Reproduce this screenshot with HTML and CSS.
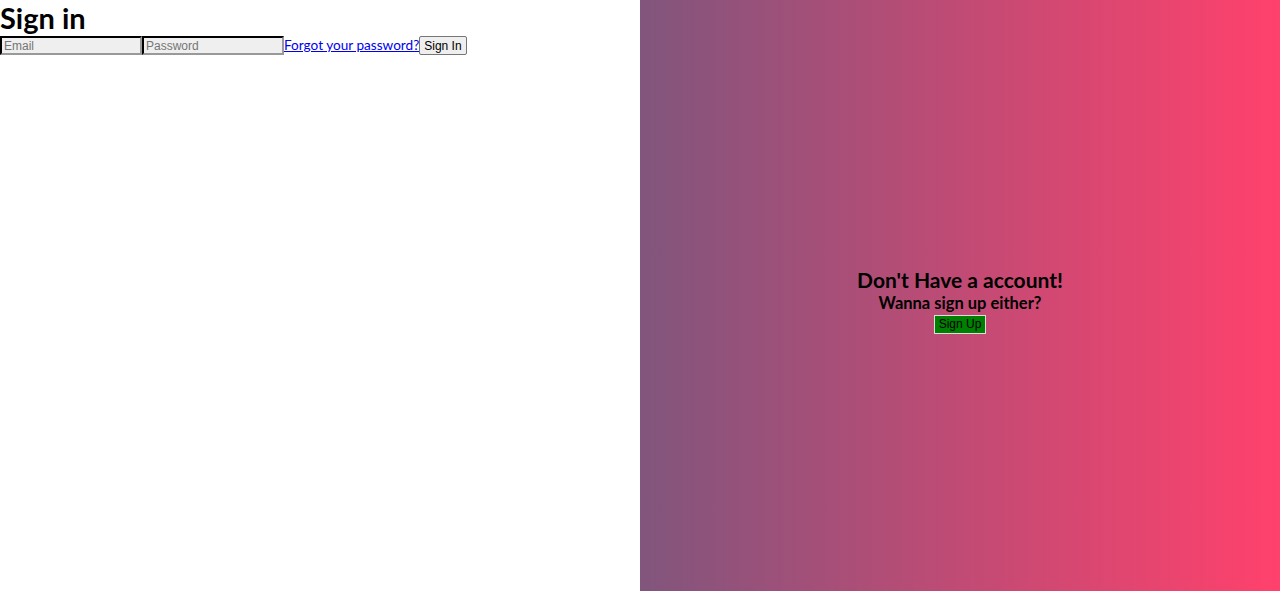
FILE: index.html
```html
<!DOCTYPE html>
<html>
<head>
<meta charset="utf-8">
<link rel="stylesheet" href="styles.css">
</head>
<body>
<div class="page">
  <div class="left">
    <h1 class="title">Sign in</h1>
    <form class="form">
      <input class="field" type="email" placeholder="Email"><input class="field" type="password" placeholder="Password"><a class="forgot" href="#">Forgot your password?</a><button class="btn" type="button">Sign In</button>
    </form>
  </div>
  <div class="right">
    <h2 class="cta-title">Don't Have a account!</h2>
    <h3 class="cta-sub">Wanna sign up either?</h3>
    <button class="btn-up" type="button">Sign Up</button>
  </div>
</div>
</body>
</html>
```
FILE: styles.css
```css
html, body { margin: 0; padding: 0; height: 100%; }
body { font-family: Lato, "Noto Sans", sans-serif; }
.page { display: flex; height: 591px; }
.left { width: 640px; background: #fff; }
.title { margin: 0; font-size: 29px; line-height: 36px; font-weight: 700; color: #000; }
.form { display: flex; align-items: center; height: 19px; }
.field { box-sizing: border-box; width: 142px; height: 19px; margin: 0; padding: 0 2px; border: 2px inset #767676; border-color: #333 #999 #999 #333; background: #efefef; font-family: "Liberation Sans", Arial, sans-serif; font-size: 12px; }
.field::placeholder { color: #757575; }
.forgot { color: #0000ee; font-size: 13.6px; line-height: 17px; text-decoration: underline; }
.btn { box-sizing: border-box; height: 19px; padding: 0 4px; margin: 0; font-family: "Liberation Sans", Arial, sans-serif; font-size: 12px; background: #efefef; border: 1px solid #767676; border-radius: 2px; color: #000; }
.right { width: 640px; box-sizing: border-box; padding-top: 10px; background: linear-gradient(to right, #81557d, #ff416c); display: flex; flex-direction: column; align-items: center; justify-content: center; color: #000; }
.cta-title { margin: 0; font-size: 21px; line-height: 24px; font-weight: 700; }
.cta-sub { margin: 0; font-size: 16.5px; line-height: 22px; font-weight: 700; }
.btn-up { box-sizing: border-box; height: 19px; padding: 0 4px; margin: 1px 0 0; font-family: "Liberation Sans", Arial, sans-serif; font-size: 12px; background: #008000; border: 1px solid #ddd; color: #000; }
```
